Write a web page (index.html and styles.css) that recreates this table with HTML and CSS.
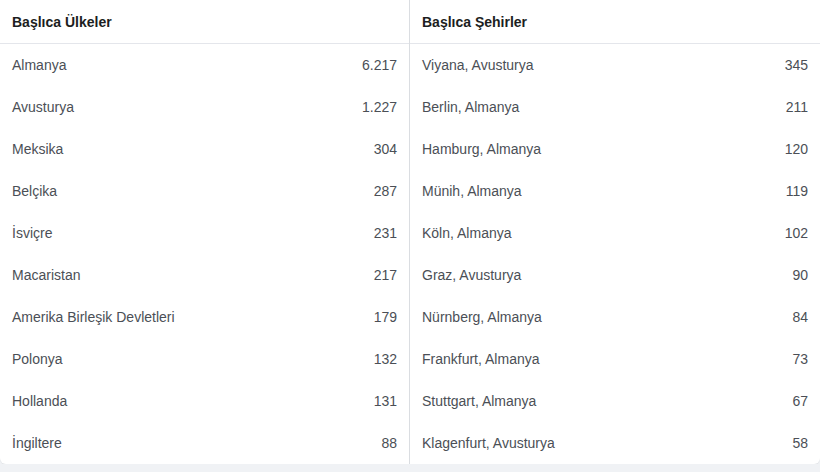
FILE: index.html
```html
<!DOCTYPE html>
<html lang="tr">
<head>
<meta charset="utf-8">
<title>Başlıca Ülkeler ve Şehirler</title>
<link rel="stylesheet" href="styles.css">
</head>
<body>
<div class="card">
  <section class="col">
    <div class="head">Başlıca Ülkeler</div>
    <div class="row"><span>Almanya</span><span>6.217</span></div>
    <div class="row"><span>Avusturya</span><span>1.227</span></div>
    <div class="row"><span>Meksika</span><span>304</span></div>
    <div class="row"><span>Belçika</span><span>287</span></div>
    <div class="row"><span>İsviçre</span><span>231</span></div>
    <div class="row"><span>Macaristan</span><span>217</span></div>
    <div class="row"><span>Amerika Birleşik Devletleri</span><span>179</span></div>
    <div class="row"><span>Polonya</span><span>132</span></div>
    <div class="row"><span>Hollanda</span><span>131</span></div>
    <div class="row"><span>İngiltere</span><span>88</span></div>
  </section>
  <section class="col">
    <div class="head">Başlıca Şehirler</div>
    <div class="row"><span>Viyana, Avusturya</span><span>345</span></div>
    <div class="row"><span>Berlin, Almanya</span><span>211</span></div>
    <div class="row"><span>Hamburg, Almanya</span><span>120</span></div>
    <div class="row"><span>Münih, Almanya</span><span>119</span></div>
    <div class="row"><span>Köln, Almanya</span><span>102</span></div>
    <div class="row"><span>Graz, Avusturya</span><span>90</span></div>
    <div class="row"><span>Nürnberg, Almanya</span><span>84</span></div>
    <div class="row"><span>Frankfurt, Almanya</span><span>73</span></div>
    <div class="row"><span>Stuttgart, Almanya</span><span>67</span></div>
    <div class="row"><span>Klagenfurt, Avusturya</span><span>58</span></div>
  </section>
</div>
</body>
</html>
```

FILE: styles.css
```css
html, body {
  margin: 0;
  padding: 0;
  background: #f0f2f5;
  font-family: "Liberation Sans", Arial, sans-serif;
  font-size: 14px;
}
.card {
  width: 820px;
  background: #ffffff;
  display: grid;
  grid-template-columns: 409px 411px;
  border-radius: 0 0 6px 6px;
  box-shadow: 0 1px 1px rgba(0, 0, 0, 0.06);
}
.col + .col {
  border-left: 1px solid #dadde1;
}
.head {
  height: 43px;
  border-bottom: 1px solid #e4e6eb;
  padding: 0 12px;
  display: flex;
  align-items: center;
  font-weight: bold;
  color: #1c1e21;
}
.row {
  height: 42px;
  padding: 0 12px;
  display: flex;
  align-items: center;
  justify-content: space-between;
  color: #4b4f56;
}
```
